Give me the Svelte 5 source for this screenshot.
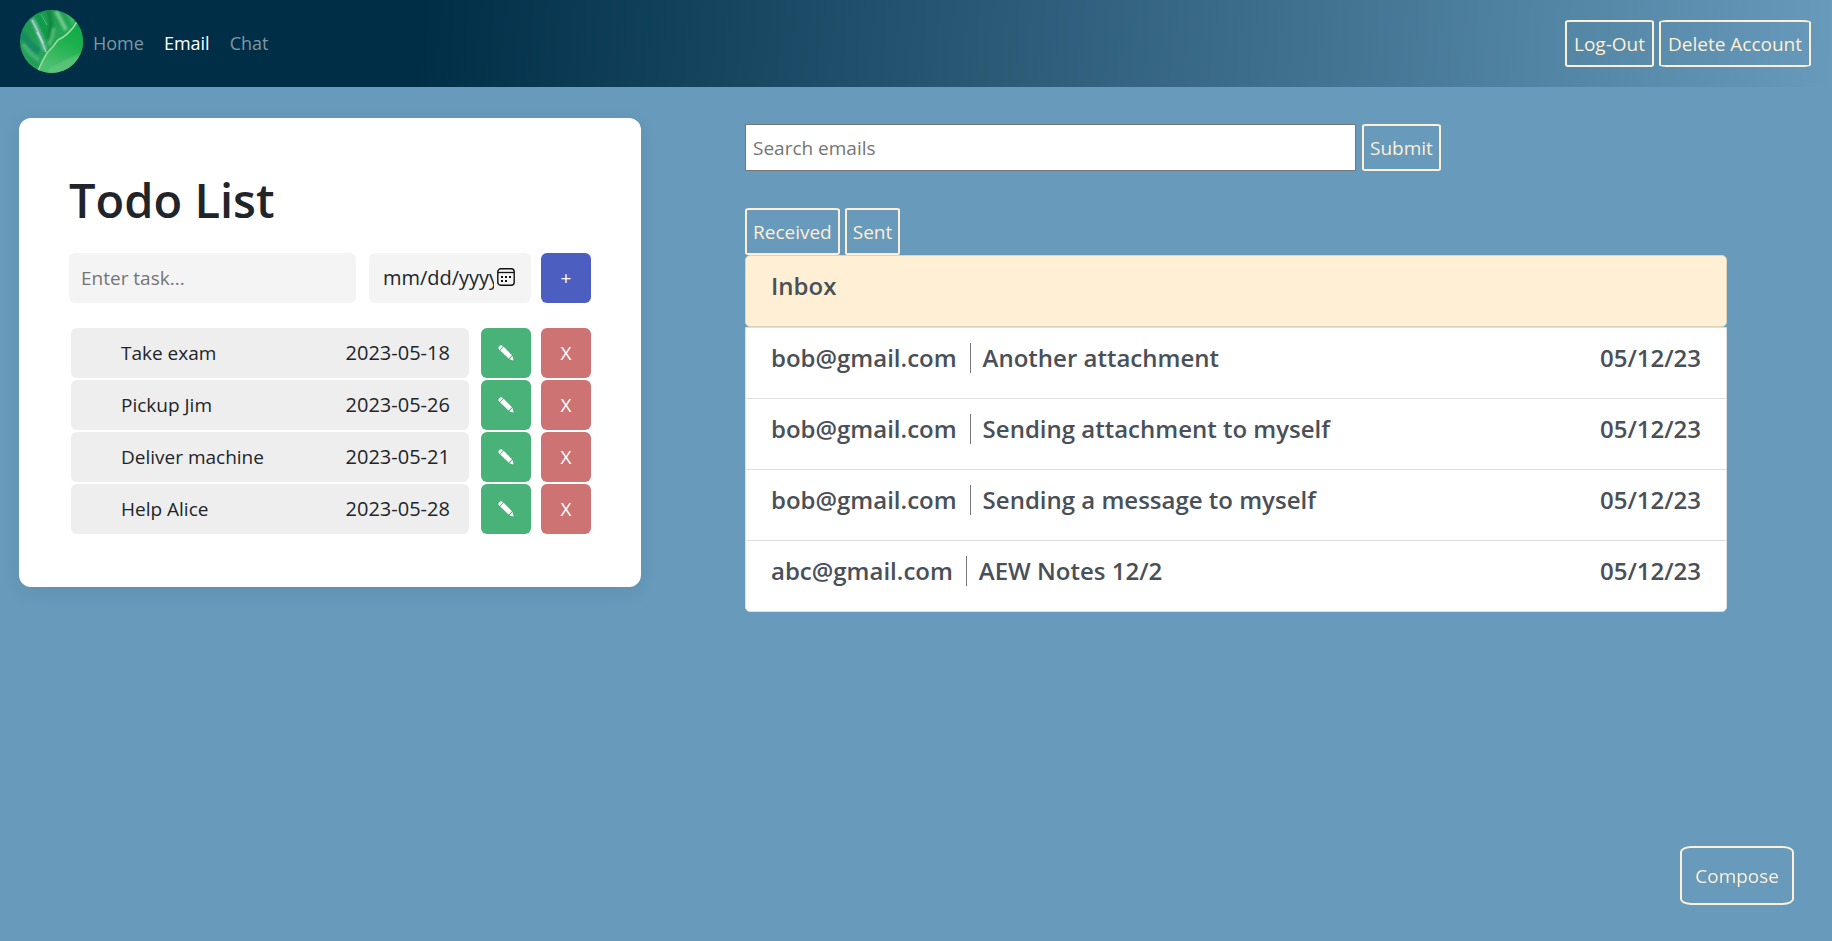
<script>
  const links = ['Home', 'Email', 'Chat'];
  const tasks = [
    { name: 'Take exam', due: '2023-05-18' },
    { name: 'Pickup Jim', due: '2023-05-26' },
    { name: 'Deliver machine', due: '2023-05-21' },
    { name: 'Help Alice', due: '2023-05-28' }
  ];
  const emails = [
    { from: 'bob@gmail.com', subject: 'Another attachment', date: '05/12/23' },
    { from: 'bob@gmail.com', subject: 'Sending attachment to myself', date: '05/12/23' },
    { from: 'bob@gmail.com', subject: 'Sending a message to myself', date: '05/12/23' },
    { from: 'abc@gmail.com', subject: 'AEW Notes 12/2', date: '05/12/23' }
  ];
</script>

<header>
  <svg class="logo" viewBox="0 0 63 63" aria-hidden="true">
    <defs>
      <clipPath id="round"><circle cx="31.5" cy="31.5" r="31.5" /></clipPath>
      <linearGradient id="leaf" x1="0" y1="0" x2="1" y2="1">
        <stop offset="0" stop-color="#1c9355" />
        <stop offset="0.5" stop-color="#24a557" />
        <stop offset="1" stop-color="#2fb85c" />
      </linearGradient>
      <linearGradient id="lobe" x1="0.9" y1="0" x2="0.5" y2="1">
        <stop offset="0" stop-color="#06aa45" />
        <stop offset="0.45" stop-color="#1cb04e" />
        <stop offset="1" stop-color="#4fc071" />
      </linearGradient>
      <filter id="soft" x="-30%" y="-30%" width="160%" height="160%"><feGaussianBlur stdDeviation="1.3" /></filter>
      <filter id="vein" x="-30%" y="-30%" width="160%" height="160%"><feGaussianBlur stdDeviation="0.4" /></filter>
    </defs>
    <g clip-path="url(#round)">
      <rect width="63" height="63" fill="url(#leaf)" />
      <g fill="none" filter="url(#soft)">
        <path d="M1 22 Q8 34 19 42" stroke="#178a62" stroke-width="7" />
        <path d="M17 2 Q22 14 28 27" stroke="#0e9c4a" stroke-width="7" />
        <path d="M28 0 Q33 12 29 30" stroke="#118a40" stroke-width="5" />
        <path d="M36 1 Q41 10 46 20" stroke="#6fca88" stroke-width="4" />
        <path d="M48 3 Q53 8 53 14" stroke="#3db968" stroke-width="4" />
        <path d="M12 9 Q19 22 25 40" stroke="#70b9a0" stroke-width="4" />
        <path d="M3 34 Q10 44 19 50" stroke="#45b077" stroke-width="4" />
        <path d="M10 48 Q14 53 18 56" stroke="#219a55" stroke-width="4" />
        <path d="M34 18 Q33 26 29 35" stroke="#58bd7d" stroke-width="3" />
      </g>
      <path d="M63 8 L57 13 Q49 25 38 30 Q34 36 27 43 Q22 51 18 60 V63 H63 Z" fill="url(#lobe)" />
      <path d="M28 60 Q43 49 63 43 V63 H28 Z" fill="#6cc985" opacity="0.55" filter="url(#soft)" />
      <g fill="none" filter="url(#vein)">
        <path d="M12 10 Q17 19 21 29 L26 42" stroke="#9bcfc0" stroke-width="1.6" />
        <path d="M17 22 L23 33" stroke="#b8dadb" stroke-width="1.6" />
        <path d="M21 4 L27 15" stroke="#61bd87" stroke-width="0.8" />
        <path d="M57 12 Q49 25 38 30 Q34 36 27 43 Q22 51 18 61" stroke="#9bdc9e" stroke-width="1.5" />
      </g>
    </g>
  </svg>
  <nav aria-label="Main">
    {#each links as link}
      <a href={'#' + link.toLowerCase()} class:active={link === 'Email'}>{link}</a>
    {/each}
  </nav>
  <div class="account">
    <button class="outline">Log-Out</button>
    <button class="outline">Delete Account</button>
  </div>
</header>

<main>
  <section class="todo">
    <h1>Todo List</h1>
    <form class="add" onsubmit={(e) => e.preventDefault()}>
      <input class="task-name" type="text" placeholder="Enter task..." aria-label="Task" />
      <div class="date">
        <input type="text" value="mm/dd/yyyy" aria-label="Due date" />
        <svg viewBox="0 0 18 18" aria-hidden="true">
          <rect x="0.8" y="0.8" width="16.4" height="16.4" rx="3" fill="none" stroke="#111" stroke-width="1.4" />
          <path d="M1 4.5H17" stroke="#111" stroke-width="1.3" />
          <path d="M4 8h2v2h-2zM8 8h2v2h-2zM12 8h2v2h-2zM4 12h2v2h-2zM8 12h2v2h-2z" fill="#111" />
        </svg>
      </div>
      <button class="square add-button">+</button>
    </form>
    <ul class="tasks">
      {#each tasks as task}
        <li>
          <div class="task"><span>{task.name}</span><span class="due">{task.due}</span></div>
          <button class="square edit" aria-label={'Edit ' + task.name}>
            <svg viewBox="0 0 16 16" aria-hidden="true">
              <path d="M1.2 1.2Q3-.6 5 1.2L1.6 5Q-.6 3.200 1.200 1.200ZM5.700 1.800 14 10.200 10.600 13.600 2.200 5.600ZM14.500 11 15.600 15.400 11.400 14.300Z" fill="#fff" />
            </svg>
          </button>
          <button class="square delete">X</button>
        </li>
      {/each}
    </ul>
  </section>

  <section class="mail">
    <form class="search" onsubmit={(e) => e.preventDefault()}>
      <input type="text" placeholder="Search emails" aria-label="Search emails" />
      <button class="outline">Submit</button>
    </form>
    <div class="folders">
      <button class="outline">Received</button>
      <button class="outline">Sent</button>
    </div>
    <h2>Inbox</h2>
    <ul class="messages">
      {#each emails as email}
        <li>
          <span class="from">{email.from}</span>
          <span class="subject">{email.subject}</span>
          <span class="sent-on">{email.date}</span>
        </li>
      {/each}
    </ul>
  </section>
</main>

<button class="outline compose">Compose</button>

<style>
  :global(body) {
    background: #679abb;
    color: #212529;
    font: 19px/30px "Open Sans", "Noto Sans", sans-serif;
  }
  *, *::before { box-sizing: border-box; }
  h1, h2, ul { margin: 0; padding: 0; }
  ul { list-style: none; }
  button, input { font: inherit; margin: 0; }
  button { cursor: pointer; }

  header {
    display: flex;
    align-items: center;
    min-height: 87px;
    padding: 0 21px 0 20px;
    background: linear-gradient(95deg, #002e47 23%, #679abb 100%);
  }
  .logo { width: 63px; height: 63px; margin-bottom: 4px; }
  nav { display: flex; gap: 20px; margin: 0 0 2px 10px; font-size: 18px; }
  nav a { color: #7f96a3; text-decoration: none; }
  nav a.active { color: #fff; }
  .account { display: flex; gap: 5px; margin-left: auto; }

  .outline {
    height: 47px;
    padding: 0 7px;
    border: 2px solid #feefd5;
    border-radius: 5%;
    background: transparent;
    color: #feefd5;
  }

  main {
    display: flex;
    align-items: flex-start;
    padding: 31px 19px 0;
  }
  .todo {
    flex: 0 0 auto;
    width: calc(34vw - 1px);
    padding: 52px 50px 53px;
    border-radius: 12px;
    background: #fff;
    box-shadow: 0 5px 20px rgba(0, 0, 0, 0.07);
  }
  h1 { font-size: 47px; line-height: 60px; font-weight: 600; }
  .add { display: flex; margin-top: 23px; }
  .add input { border: 0; background: transparent; outline: 0; color: #212529; }
  .add .task-name {
    flex: 1;
    min-width: 0;
    height: 50px;
    padding: 0 12px;
    border-radius: 6px;
    background: #f4f4f4;
  }
  ::placeholder { color: #757575; opacity: 1; }
  .date {
    display: flex;
    align-items: center;
    width: 162px;
    height: 50px;
    margin: 0 10px 0 13px;
    padding: 0 16px 0 14px;
    border-radius: 6px;
    background: #f4f4f4;
  }
  .add .date input { width: 111px; padding: 0; font-size: 20px; }
  .date svg { flex: none; width: 18px; height: 18px; margin: 0 0 2px 3px; }
  .square {
    flex: none;
    width: 50px;
    height: 50px;
    padding: 0;
    border: 0;
    border-radius: 6px;
    color: #fff;
  }
  .add-button { background: #4c5fc1; }
  .edit { background: #48b279; }
  .delete { margin-left: 10px; background: #cd7373; }
  .edit svg { display: block; width: 16px; height: 16px; margin: 0 auto; }
  .tasks { display: grid; gap: 2px; margin-top: 25px; padding-left: 2px; }
  .tasks li { display: flex; }
  .task {
    display: flex;
    flex: 1;
    align-items: center;
    justify-content: space-between;
    height: 50px;
    margin-right: 12px;
    padding: 0 19px 0 50px;
    border-radius: 6px;
    background: #eee;
  }
  .due { font-size: 20px; }

  .mail { width: 982px; margin: 6px 86px 0 auto; }
  .search { display: flex; gap: 6px; }
  .search input {
    width: 611px;
    height: 47px;
    padding: 0 7px;
    border: 1px solid #767676;
    background: #fff;
  }
  .folders { display: flex; gap: 5px; margin-top: 37px; }
  .search .outline, .folders .outline { padding: 0 6px; }
  h2, .messages {
    color: #495057;
    font-size: 24px;
    line-height: 30px;
    font-weight: 600;
  }
  h2 {
    height: 72px;
    padding: 15px 25px;
    border: 1px solid #dfd3bd;
    border-radius: 5px;
    background: #feefd5;
  }
  .messages {
    border: 1px solid #dfdfdf;
    border-radius: 0 0 5px 5px;
    background: #fff;
  }
  .messages li { display: flex; height: 70px; padding: 15px 25px; }
  .messages li + li { height: 71px; border-top: 1px solid #dfdfdf; }
  .subject {
    height: 30px;
    margin-left: 13px;
    padding-left: 12px;
    border-left: 1px solid #777;
  }
  .sent-on { margin-left: auto; }

  .compose {
    position: fixed;
    right: 38px;
    bottom: 36px;
    height: 59px;
    padding: 0 13px;
    border-radius: 10%;
  }
</style>
